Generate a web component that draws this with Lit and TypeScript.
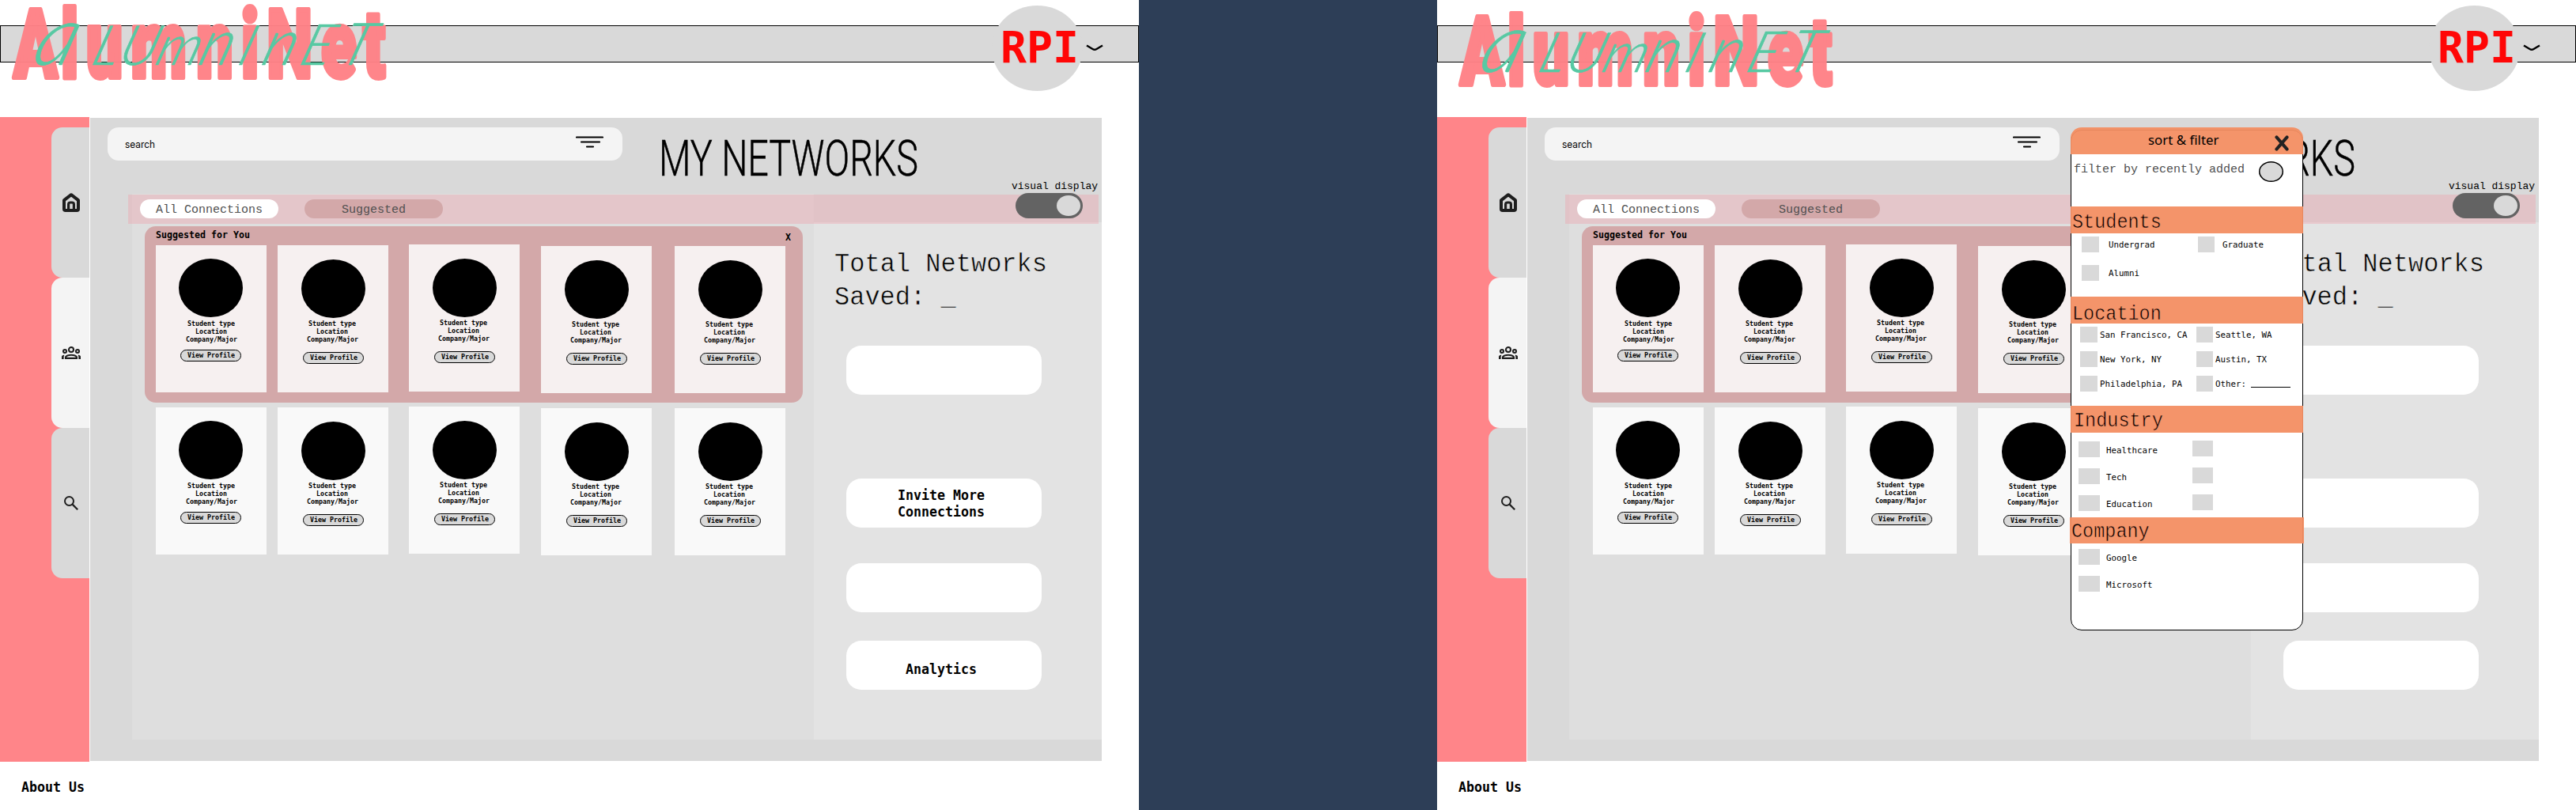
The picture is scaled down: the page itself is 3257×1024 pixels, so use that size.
import { LitElement, html, svg, css, nothing } from "lit";
import { customElement, property } from "lit/decorators.js";

/** One line of text whose box runs from cap top to baseline, set to an exact measure. */
const line = (text: string, width: number, cap: number, size: number, cls = "") => html`
  <svg class="line ${cls}" width=${width} height=${cap}>
    ${svg`<text x="0" y=${cap} font-size=${size} textLength=${width} lengthAdjust="spacingAndGlyphs">${text}</text>`}
  </svg>`;

const lineStyles = css`
  .line {
    display: block;
    flex: none;
    overflow: visible;
    font-family: "DejaVu Sans Mono", monospace;
    fill: #000;
  }
  .bold { font-weight: 700; }
  .thin { font-family: "Liberation Mono", monospace; }
  .soft { fill: #505050; }
`;

@customElement("profile-card")
export class ProfileCard extends LitElement {
  static styles = [lineStyles, css`
    :host {
      display: flex;
      flex: none;
      flex-direction: column;
      align-items: center;
      box-sizing: border-box;
      width: 140px;
      height: 186px;
      padding: var(--avatar-top, 18px) var(--nudge, 2px) 0 0;
      background: var(--card, #f9f9f9);
    }
    .avatar {
      width: 81px;
      height: 74px;
      margin-left: var(--avatar-shift, 3px);
      border-radius: 50%;
      background: #000;
    }
    .facts {
      display: flex;
      flex-direction: column;
      align-items: center;
      gap: 4px;
      margin-top: var(--facts-gap, 4px);
    }
    .view {
      display: flex;
      justify-content: center;
      box-sizing: border-box;
      width: 77px;
      height: 15px;
      margin: var(--view-gap, 13px) 0 0 var(--avatar-shift, 3px);
      padding-top: 3px;
      border: 1px solid #000;
      border-radius: 8px;
      background: #d9d9d9;
    }
  `];

  render() {
    return html`
      <div class="avatar"></div>
      <div class="facts">
        ${line("Student type", 60, 6, 8.5, "bold")}
        ${line("Location", 40, 6, 8.5, "bold")}
        ${line("Company/Major", 65, 6, 8.5, "bold")}
      </div>
      <div class="view">${line("View Profile", 60, 6, 8.5, "bold")}</div>
    `;
  }
}

interface Section {
  title: string;
  kind: string;
  options: string[];
}

const SECTIONS: Section[] = [
  { title: "Students", kind: "students", options: ["Undergrad", "Graduate", "Alumni"] },
  {
    title: "Location",
    kind: "location",
    options: ["San Francisco, CA", "Seattle, WA", "New York, NY", "Austin, TX", "Philadelphia, PA", "Other:"],
  },
  { title: "Industry", kind: "industry", options: ["Healthcare", "", "Tech", "", "Education", ""] },
  { title: "Company", kind: "company", options: ["Google", "", "Microsoft", ""] },
];

@customElement("filter-sheet")
export class FilterSheet extends LitElement {
  static styles = [lineStyles, css`
    :host { display: block; width: 294px; height: 636px; }
    .sheet { position: relative; height: 636px; }
    .back {
      position: absolute;
      inset: 3px 0 0 0;
      border: 1px solid #000;
      border-radius: 14px;
      background: #fff;
    }
    .content { position: relative; }
    .band {
      display: flex;
      box-sizing: border-box;
      height: 34px;
      padding: 10px 0 0 1.5px;
      background: rgba(243, 142, 98, 0.95);
    }
    .band .thin { stroke: #f4946a; stroke-width: 0.6px; }
    .head { border-radius: 14px 14px 0 0; padding: 10px 18px 0 98px; justify-content: space-between; }
    .sans { font-family: "Noto Sans", "Open Sans", sans-serif; }
    .recent {
      display: flex;
      justify-content: space-between;
      box-sizing: border-box;
      height: 66px;
      padding: 9px 25px 0 4px;
    }
    .recent .line { margin-top: 4px; }
    .radio {
      width: 31px;
      height: 26px;
      border-radius: 50%;
      background: #d9d9d9;
      box-shadow: inset 0 0 0 1.5px #000;
    }
    .options { display: grid; box-sizing: border-box; align-content: start; }
    .option { display: flex; align-items: flex-start; }
    .box { flex: none; height: 20px; background: #d9d9d9; }
    .blank { width: 50px; height: 1px; margin: 14px 0 0 6px; background: #000; }
    .students { height: 80px; padding: 4px 0 0 14px; grid-template-columns: 146.5px 140px; grid-auto-rows: 36px; }
    .students .box { width: 21.5px; margin-right: 12px; }
    .students .option:nth-child(2) .box { margin-right: 10px; }
    .students .line { margin-top: 6px; }
    .location { height: 104px; padding: 4px 0 0 12px; grid-template-columns: 146.5px 140px; grid-auto-rows: 31px; }
    .location .box { width: 21.5px; margin-right: 3px; }
    .location .line { margin-top: 6px; }
    .industry { height: 107px; padding: 11px 0 0 10px; }
    .company { height: 110px; padding: 7px 0 0 10px; }
    .industry, .company { grid-template-columns: 143.5px 140px; grid-auto-rows: 34px; }
    .industry .box, .company .box { width: 26.5px; margin-right: 8px; }
    .industry .option:nth-child(even) { margin-top: -1px; }
    .industry .line, .company .line { margin-top: 7px; }
    .location-band { padding-top: 12px; }
    .industry-band { padding: 9px 0 0 4px; }
    .company-band { height: 33px; margin: 0 -1px; padding-top: 8px; }
  `];

  render() {
    return html`
      <div class="sheet">
        <div class="back"></div>
        <div class="content">
          <div class="band head">
            ${line("sort & filter", 89.5, 12, 16.5, "sans")}
            <svg width="18" height="20" viewBox="0 0 18 20">
              <path d="M2.4 2.4 15.6 17.6M15.6 2.4 2.4 17.6" fill="none" stroke="#222" stroke-width="4" stroke-linecap="round" />
            </svg>
          </div>
          <div class="recent">
            ${line("filter by recently added", 216, 10, 15, "thin soft")}
            <div class="radio"></div>
          </div>
          ${SECTIONS.map((s) => html`
            <div class="band ${s.kind}-band">${line(s.title, s.title.length * 14.1, 17, 26, "thin")}</div>
            <div class="options ${s.kind}">
              ${s.options.map((o) => s.kind === "company" && !o ? html`<span></span>` : html`
                <div class="option">
                  <div class="box"></div>
                  ${o ? line(o, o.length * 6.5, 8, 11.2) : nothing}
                  ${o === "Other:" ? html`<div class="blank"></div>` : nothing}
                </div>`)}
            </div>`)}
        </div>
      </div>
    `;
  }
}

@customElement("network-screen")
export class NetworkScreen extends LitElement {
  @property({ type: Boolean }) filtering = false;

  static styles = [lineStyles, css`
    :host { display: block; flex: none; }
    .frame {
      position: relative;
      display: flex;
      flex-direction: column;
      width: 1440px;
      height: 1024px;
      background: #fff;
    }
    .header { box-sizing: border-box; height: 148px; padding-top: 32px; }
    .bar { box-sizing: border-box; height: 47px; border: 1px solid #000; background: #d9d9d9; }
    .logo { position: absolute; left: 0; top: 0; overflow: visible; }
    .logo.shifted { left: 11.5px; top: 9px; }
    .word { font-family: Roboto, sans-serif; font-weight: 900; fill: #ff8287; stroke: #ff8287; opacity: 0.97; }
    .script { font-family: Lato, sans-serif; font-weight: 300; font-style: italic; fill: #57c9a3; }
    .badge {
      position: absolute;
      left: 1254px;
      top: 7px;
      display: flex;
      align-items: flex-start;
      box-sizing: border-box;
      width: 115px;
      height: 108px;
      padding: 32px 0 0 11px;
      border-radius: 50%;
      background: #d9d9d9;
    }
    .rpi { fill: #ff0606; }
    .chevron { flex: none; margin: 17px 0 0 9px; overflow: visible; }
    .body { display: flex; height: 815px; }
    .side { display: flex; flex-direction: column; align-items: flex-end; box-sizing: border-box; width: 113px; padding-top: 13px; background: #ff8589; }
    .tab {
      display: flex;
      align-items: center;
      justify-content: center;
      width: 48px;
      height: 190px;
      border-radius: 14px 0 0 14px;
      background: #d9d9d9;
    }
    .tab.on { background: #f4f4f4; }
    .tab svg { display: block; margin-left: 2px; }
    .panel { width: 1279px; height: 813px; margin: 1px 0 0 1px; background: #d9d9d9; }
    .top { display: flex; align-items: flex-start; height: 96px; padding-left: 22px; }
    .search {
      display: flex;
      justify-content: space-between;
      box-sizing: border-box;
      width: 651px;
      height: 42px;
      margin-top: 12px;
      padding: 11px 24px 0 22px;
      border-radius: 14px;
      background: #f4f4f4;
    }
    .search .line { font-family: Inter, sans-serif; margin-top: 6px; }
    .title { font-family: Roboto, sans-serif; font-weight: 300; stroke: #000; stroke-width: 0.5px; margin: 28px 0 0 46px; }
    .display { margin: 80px 0 0 118px; }
    .main { position: relative; display: flex; height: 690px; padding-left: 53px; }
    .strip {
      position: absolute;
      left: 48px;
      top: 1px;
      display: flex;
      align-items: flex-start;
      box-sizing: border-box;
      width: 1227px;
      height: 37px;
      padding-left: 15px;
      background: rgba(242, 156, 165, 0.35);
    }
    .pill {
      display: flex;
      justify-content: center;
      box-sizing: border-box;
      width: 175px;
      height: 24px;
      margin: 6px 33px 0 0;
      padding-top: 7px;
      border-radius: 12px;
      background: #fff;
    }
    .pill.tinted { background: #d3a8a9; }
    .toggle {
      display: flex;
      justify-content: flex-end;
      box-sizing: border-box;
      width: 85px;
      height: 32px;
      margin: -2px 20px 0 auto;
      padding: 3px 3.5px;
      border-radius: 16px;
      background: #636363;
    }
    .knob { width: 29.5px; height: 26px; border-radius: 50%; background: #d9d9d9; }
    .people { box-sizing: border-box; width: 862px; padding: 41px 0 0 16px; background: #dedede; }
    .suggested {
      --card: #f6f0f0;
      box-sizing: border-box;
      width: 832px;
      height: 223px;
      padding: 6px 0 0 14px;
      border-radius: 14px;
      background: #d3a8a9;
    }
    .caption { display: flex; justify-content: space-between; height: 17px; padding-right: 15px; }
    .close { margin-top: 3px; }
    .cards { display: flex; align-items: flex-start; }
    .rest { padding: 5px 0 0 14px; }
    profile-card:nth-child(1) {
      margin: 1px 14px 0 0;
      --view-gap: 10px;
      --avatar-top: 17px;
      --facts-gap: 5px;
      --nudge: 0px;
      --avatar-shift: -1px;
    }
    profile-card:nth-child(2) { margin: 1px 26px 0 0; }
    profile-card:nth-child(3) { margin: 0 27px 0 0; }
    profile-card:nth-child(4) { margin: 2px 29px 0 0; }
    profile-card:nth-child(5) { margin: 2px 0 0 0; }
    .stats { box-sizing: border-box; width: 364px; height: 654px; margin-top: 36px; padding: 40px 0 0 26px; background: #e3e3e3; }
    .total { display: flex; flex-direction: column; gap: 20px; }
    .total .line { stroke: #e3e3e3; stroke-width: 0.5px; }
    .action {
      display: flex;
      flex-direction: column;
      align-items: center;
      gap: 8px;
      box-sizing: border-box;
      width: 247px;
      height: 62px;
      margin: 0 0 0 15px;
      padding: 14px 8px 0 0;
      border-radius: 19px;
      background: #fff;
    }
    .action.first { margin-top: 52px; margin-bottom: 106px; }
    .action.second { margin-bottom: 45px; }
    .action.third { margin-bottom: 36px; }
    .action.last { padding-top: 29px; }
    .footer { padding: 25px 0 0 27px; }
    .sheet { position: absolute; left: 801px; top: 161px; }
  `];

  private cards() {
    return [0, 1, 2, 3, 4].map(() => html`<profile-card></profile-card>`);
  }

  render() {
    const on = this.filtering;
    return html`
      <div class="frame">
        <div class="header"><div class="bar"></div></div>
        <svg class="logo ${on ? "shifted" : ""}" width="500" height="110">
          <text class="word" transform="scale(0.68 1)" y="97.5" font-size="121" stroke-width="6" stroke-linejoin="round"
            x="25 113 160 243 365 448 496 597 675">AlumniNet</text>
          <text class="script" transform="translate(0 82) skewX(-18)" y="0" font-size="70" stroke="#57c9a3" stroke-width="0.6"><tspan x="38" font-size="104">a</tspan><tspan x="113">L</tspan><tspan x="147">U</tspan><tspan x="194">m</tspan><tspan x="248" font-size="80">n</tspan><tspan x="298">I</tspan><tspan x="328" font-size="80">n</tspan><tspan x="376" font-size="72">E</tspan><tspan x="426" font-size="74">T</tspan></text>
        </svg>
        <div class="badge">
          ${line("RPI", 99, 40, 55, "bold rpi")}
          <svg class="chevron" width="22" height="9" viewBox="0 0 22 9">
            <path d="M1 1.5 8.5 6Q11 7.6 13.5 6L21 1.5" fill="none" stroke="#000" stroke-width="2.4" />
          </svg>
        </div>
        <div class="body">
          <div class="side">
            <div class="tab">
              <svg width="22" height="24" viewBox="0 0 22 24">
                <path d="M2 9.2 11 2.2 20 9.2V20.2Q20 22 18.2 22H3.8Q2 22 2 20.2Z" fill="none" stroke="#1e1e1e" stroke-width="4" stroke-linejoin="round" />
                <path d="M7.6 21V14.2Q7.6 12 9.8 12H12.2Q14.4 12 14.4 14.2V21" fill="none" stroke="#1e1e1e" stroke-width="3.2" />
              </svg>
            </div>
            <div class="tab on">
              <svg width="24" height="16" viewBox="0 0 24 16">
                <g fill="none" stroke="#1e1e1e" stroke-width="2.1">
                  <circle cx="12" cy="4" r="3" />
                  <circle cx="4" cy="6" r="2" />
                  <circle cx="20" cy="6" r="2" />
                  <path d="M5 14.9V13.4Q6.6 10.8 12 10.8T19 13.4V14.9Z" />
                </g>
                <path d="M0 16V13Q0 11.2 3.4 10.6 2.6 12 2.6 16ZM24 16V13Q24 11.2 20.6 10.6 21.4 12 21.4 16Z" fill="#1e1e1e" />
              </svg>
            </div>
            <div class="tab">
              <svg width="18" height="18" viewBox="0 0 18 18">
                <circle cx="6.5" cy="6.5" r="5.5" fill="none" stroke="#1e1e1e" stroke-width="2" />
                <path d="M10.6 10.6 17.2 17.2" stroke="#1e1e1e" stroke-width="2.2" />
              </svg>
            </div>
          </div>
          <div class="panel">
            <div class="top">
              <div class="search">
                ${line("search", 38, 9, 12.5)}
                <svg width="35" height="16" viewBox="0 0 35 16">
                  <path d="M1 1.5H34M7 7.5H30M14 13.5H22" stroke="#000" stroke-width="2.2" stroke-linecap="round" />
                </svg>
              </div>
              ${line("MY NETWORKS", 328, 45, 63, "title")}
              ${line("visual display", 109, 10, 13, "thin display")}
            </div>
            <div class="main">
              <div class="people">
                <div class="suggested">
                  <div class="caption">
                    ${line("Suggested for You", 119, 9, 12, "bold")}
                    ${line("X", 7, 9, 12, "bold close")}
                  </div>
                  <div class="cards">${this.cards()}</div>
                </div>
                <div class="cards rest">${this.cards()}</div>
              </div>
              <div class="stats">
                <div class="total">
                  ${line("Total Networks", 269, 22, 33, "thin")}
                  ${line("Saved: _", 153.6, 22, 33, "thin")}
                </div>
                <div class="action first"></div>
                <div class="action second">
                  ${on ? nothing : html`${line("Invite More", 110, 13, 17, "bold")}${line("Connections", 110, 13, 17, "bold")}`}
                </div>
                <div class="action third"></div>
                <div class="action last">${on ? nothing : line("Analytics", 90, 13, 17, "bold")}</div>
              </div>
              <div class="strip">
                <div class="pill">${line("All Connections", 135, 10, 15, "thin soft")}</div>
                <div class="pill tinted">${line("Suggested", 81, 10, 15, "thin soft")}</div>
                <div class="toggle"><div class="knob"></div></div>
              </div>
            </div>
          </div>
        </div>
        <div class="footer">${line("About Us", 80, 13, 17, "bold")}</div>
        ${on ? html`<filter-sheet class="sheet"></filter-sheet>` : nothing}
      </div>
    `;
  }
}

@customElement("app-root")
export class AppRoot extends LitElement {
  static styles = css`
    :host {
      display: flex;
      justify-content: space-between;
      width: 3257px;
      height: 1024px;
      background: #2d3e57;
    }
  `;

  render() {
    return html`
      <network-screen></network-screen>
      <network-screen filtering></network-screen>
    `;
  }
}
